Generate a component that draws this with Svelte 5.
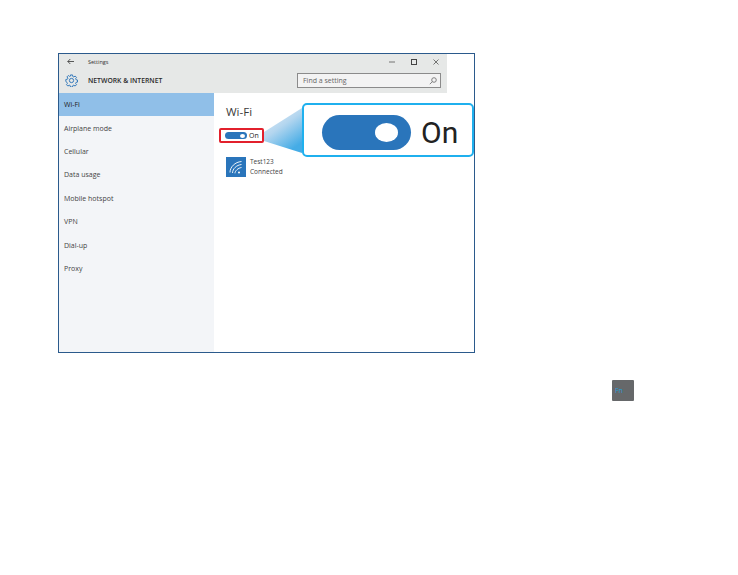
<script>
  const navItems = ['Wi-Fi', 'Airplane mode', 'Cellular', 'Data usage', 'Mobile hotspot', 'VPN', 'Dial-up', 'Proxy']
</script>

<div class="page">
  <div class="frame">
    <header class="header">
      <div class="titlebar">
        <svg class="back" width="7" height="7" viewBox="0 0 7 7" fill="none" stroke="#333" stroke-width="0.800">
          <path d="M7 3.500H0.800M3.300 1L0.800 3.500L3.300 6" />
        </svg>
        <span class="app-name">Settings</span>
        <div class="controls">
          <svg width="8" height="8" viewBox="0 0 8 8" fill="none" stroke="#555" stroke-width="0.800"><path d="M1 4h6" /></svg>
          <svg width="8" height="8" viewBox="0 0 8 8" fill="none" stroke="#444" stroke-width="1"><rect x="1.500" y="1.500" width="5" height="5" /></svg>
          <svg width="8" height="8" viewBox="0 0 8 8" fill="none" stroke="#555" stroke-width="0.800"><path d="M1.500 1.500l5 5M6.500 1.500l-5 5" /></svg>
        </div>
      </div>
      <div class="subbar">
        <svg class="gear" width="13" height="13" viewBox="0 0 14 14" fill="none" stroke="#2a72b8" stroke-width="1">
          <path d="M5.900 1h2.200l.3 1.700 1.100.5 1.400-1 1.500 1.500-1 1.400.5 1.100 1.600.3v2.200l-1.600.3-.5 1.100 1 1.400-1.500 1.500-1.400-1-1.100.5-.3 1.600H5.900l-.3-1.600-1.100-.5-1.400 1-1.500-1.500 1-1.400-.5-1.100L.9 8.100V5.900l1.700-.3.5-1.100-1-1.400 1.500-1.500 1.400 1 1.100-.5z" />
          <circle cx="7" cy="7" r="2.300" />
        </svg>
        <span class="section-name">NETWORK &amp; INTERNET</span>
        <div class="search">
          <span>Find a setting</span>
          <svg width="8" height="8" viewBox="0 0 8 8" fill="none" stroke="#666" stroke-width="0.800">
            <circle cx="5" cy="3" r="2.300" /><path d="M3.300 4.700L0.800 7.200" />
          </svg>
        </div>
      </div>
    </header>

    <div class="body">
      <nav class="sidebar">
        {#each navItems as item, i}
          <div class="nav-item" class:active={i === 0}>{item}</div>
        {/each}
      </nav>

      <main class="content">
        <h1>Wi-Fi</h1>
        <div class="toggle-box">
          <span class="toggle"><span class="knob"></span></span>
          <span class="toggle-label">On</span>
        </div>
        <div class="network">
          <div class="net-icon">
            <svg width="20" height="20" viewBox="0 0 20 20" fill="none" stroke="#fff" stroke-width="0.900">
              <path d="M4 15.500C4 10 9 5 15.500 4.500M6.500 16C6.500 12 10.500 8 15.500 7.500M9 16.300C9 14 12 11 15.500 10.500" />
              <circle cx="13" cy="15.500" r="1" fill="#fff" stroke="none" />
            </svg>
          </div>
          <div class="net-text">
            <div>Test123</div>
            <div>Connected</div>
          </div>
        </div>
      </main>
    </div>

    <svg class="beam" width="38" height="45" viewBox="0 0 38 45">
      <defs>
        <linearGradient id="beam-fill" x1="0" y1="0" x2="0.6" y2="1">
          <stop offset="0" stop-color="#e8f1f9" />
          <stop offset="0.5" stop-color="#b4d6ef" />
          <stop offset="1" stop-color="#45ace6" />
        </linearGradient>
      </defs>
      <polygon points="0,24 38,0 38,45 0,33" fill="url(#beam-fill)" />
    </svg>
    <div class="callout">
      <span class="big-toggle"><span class="big-knob"></span></span>
      <span class="big-label">On</span>
    </div>
  </div>

  <div class="key-row">
    <div class="fn-key">Fn</div>
  </div>
</div>

<style>
  :global(body) {
    margin: 0;
    background: #fff;
  }

  .page {
    width: 738px;
    height: 575px;
    box-sizing: border-box;
    padding: 53px 0 0 58px;
    overflow: hidden;
    font-family: "Open Sans", "Liberation Sans", sans-serif;
    color: #333;
  }

  .frame {
    position: relative;
    width: 417px;
    height: 300px;
    box-sizing: border-box;
    border: 1px solid #2b5a8c;
    display: flex;
    flex-direction: column;
  }

  .header {
    width: 388px;
    height: 39px;
    background: #e6e8e7;
    flex: none;
  }

  .titlebar {
    height: 15px;
    display: flex;
    align-items: center;
    padding: 0 7px 0 8px;
  }

  .back {
    margin-right: 14px;
  }

  .app-name {
    font-size: 5.500px;
  }

  .controls {
    margin-left: auto;
    display: flex;
    gap: 14px;
  }

  .subbar {
    height: 24px;
    display: flex;
    align-items: center;
    padding: 0 6px 1px 6px;
    box-sizing: border-box;
  }

  .gear {
    margin-right: 10px;
  }

  .section-name {
    font-size: 6.800px;
    font-weight: 600;
    color: #2a2a2a;
  }

  .search {
    margin-left: auto;
    width: 144px;
    height: 15px;
    box-sizing: border-box;
    border: 1px solid #8b8b8b;
    background: #f3f3f3;
    display: flex;
    align-items: center;
    justify-content: space-between;
    padding: 0 3px 0 5px;
    font-size: 7px;
    color: #666;
  }

  .body {
    flex: 1;
    display: flex;
    min-height: 0;
  }

  .sidebar {
    width: 155px;
    background: #f3f5f8;
    flex: none;
  }

  .nav-item {
    height: 23.400px;
    padding-left: 5px;
    display: flex;
    align-items: center;
    font-size: 7px;
    color: #444;
  }

  .nav-item.active {
    background: #90bfe8;
    color: #222;
  }

  .content {
    flex: 1;
    padding: 11px 0 0 12px;
  }

  h1 {
    margin: 0;
    font-size: 11.500px;
    font-weight: 400;
    line-height: 15px;
    color: #3a3a3a;
  }

  .toggle-box {
    margin-top: 9px;
    margin-left: -7px;
    width: 45px;
    height: 15px;
    box-sizing: border-box;
    border: 2px solid #e2202c;
    border-radius: 2px;
    display: flex;
    align-items: center;
    gap: 2px;
    padding-left: 4px;
  }

  .toggle {
    width: 22px;
    height: 7px;
    border-radius: 4px;
    background: #2a75bb;
    position: relative;
    flex: none;
  }

  .knob {
    position: absolute;
    right: 2.500px;
    top: 1.500px;
    width: 5px;
    height: 4px;
    border-radius: 50%;
    background: #fff;
  }

  .toggle-label {
    font-size: 7px;
    color: #222;
  }

  .network {
    margin-top: 13px;
    display: flex;
    gap: 4px;
    align-items: center;
  }

  .net-icon {
    width: 20px;
    height: 20px;
    background: #2a75bb;
  }

  .net-icon svg {
    display: block;
  }

  .net-text {
    font-size: 6.500px;
    line-height: 10px;
    color: #444;
    padding-top: 1px;
  }

  .beam {
    position: absolute;
    left: 205px;
    top: 54px;
  }

  .callout {
    position: absolute;
    left: 243px;
    top: 49px;
    width: 172px;
    height: 54px;
    box-sizing: border-box;
    border: 2px solid #1fb0ee;
    border-radius: 5px;
    background: #fff;
    display: flex;
    align-items: center;
    padding: 5px 0 0 18px;
    gap: 10px;
  }

  .big-toggle {
    width: 89px;
    height: 35px;
    border-radius: 17.500px;
    background: #2a75bb;
    position: relative;
    flex: none;
  }

  .big-knob {
    position: absolute;
    right: 13px;
    top: 8px;
    width: 23px;
    height: 19px;
    border-radius: 50%;
    background: #fff;
  }

  .big-label {
    font-size: 30px;
    font-family: Roboto, "Open Sans", sans-serif;
    color: #222;
    line-height: 1;
  }

  .key-row {
    margin: 27px 0 0 554px;
  }

  .fn-key {
    width: 22px;
    height: 21px;
    background: #66686a;
    border-radius: 1px;
    display: flex;
    align-items: center;
    padding-left: 3px;
    box-sizing: border-box;
    font-size: 7px;
    color: #2a9fd6;
  }
</style>
